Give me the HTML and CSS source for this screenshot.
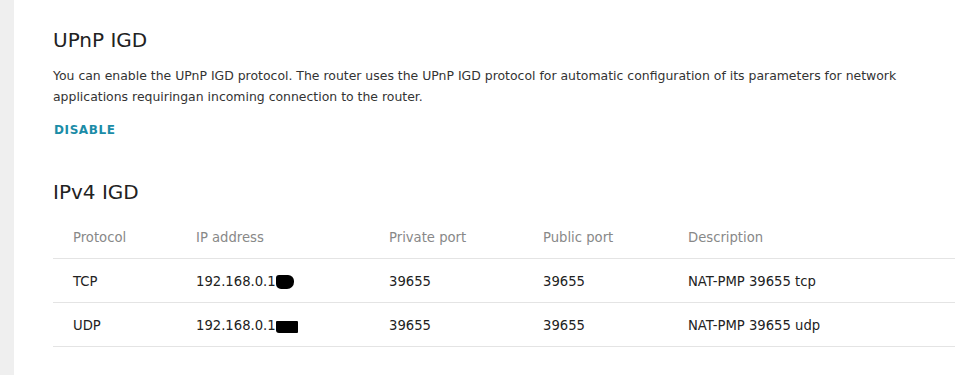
FILE: index.html
```html
<!DOCTYPE html>
<html>
<head>
<meta charset="utf-8">
<link rel="stylesheet" href="styles.css">
</head>
<body>
<div class="page">
  <div class="side"></div>
  <main class="card">
    <h1 class="title">UPnP IGD</h1>
    <p class="desc">You can enable the UPnP IGD protocol. The router uses the UPnP IGD protocol for automatic configuration of its parameters for network applications requiringan incoming connection to the router.</p>
    <a class="action">DISABLE</a>
    <h2 class="title sub">IPv4 IGD</h2>
    <table class="grid">
      <thead>
        <tr><th class="c1">Protocol</th><th class="c2">IP address</th><th class="c3">Private port</th><th class="c4">Public port</th><th>Description</th></tr>
      </thead>
      <tbody>
        <tr><td>TCP</td><td>192.168.0.1<span class="blot b1"></span></td><td>39655</td><td>39655</td><td>NAT-PMP 39655 tcp</td></tr>
        <tr><td>UDP</td><td>192.168.0.1<span class="blot b2"></span></td><td>39655</td><td>39655</td><td>NAT-PMP 39655 udp</td></tr>
      </tbody>
    </table>
  </main>
</div>
</body>
</html>
```
FILE: styles.css
```css
html, body { margin: 0; padding: 0; background: #fff; }
body { font-family: "DejaVu Sans", sans-serif; color: #222; }
.page { display: flex; min-height: 375px; }
.side { width: 14px; flex: none; background: #efefef; box-shadow: 1px 0 3px rgba(0,0,0,0.10); }
.card { flex: 1; padding: 27px 0 0 39px; background: #fff; }
.title { margin: 0; font-weight: normal; font-size: 20px; line-height: 26px; color: #222; }
.desc { margin: 12px 0 0; font-size: 12.45px; line-height: 21px; color: #333; width: 890px; }
.action { display: block; margin-top: 15px; font-weight: bold; font-size: 12px; letter-spacing: 0.6px; color: #1b8ca7; line-height: 16px; padding-left: 1px; }
.sub { margin-top: 41px; }
.grid { margin-top: 10px; border-collapse: collapse; width: 902px; font-size: 13.2px; }
.grid th, .grid td { text-align: left; padding: 2px 0 0 20px; height: 41px; border-bottom: 1px solid #e4e4e4; font-weight: normal; box-sizing: content-box; }
.grid th { color: #888; }
.grid td { color: #222; }
.c1 { width: 103px; }
.c2 { width: 173px; }
.c3 { width: 134px; }
.c4 { width: 125px; }
.blot { display: inline-block; width: 18px; height: 14px; background: #000; vertical-align: -3px; border-radius: 3px 6px 7px 5px; }
.b2 { width: 22px; height: 12px; border-radius: 1px 1px 1px 3px; }
```
